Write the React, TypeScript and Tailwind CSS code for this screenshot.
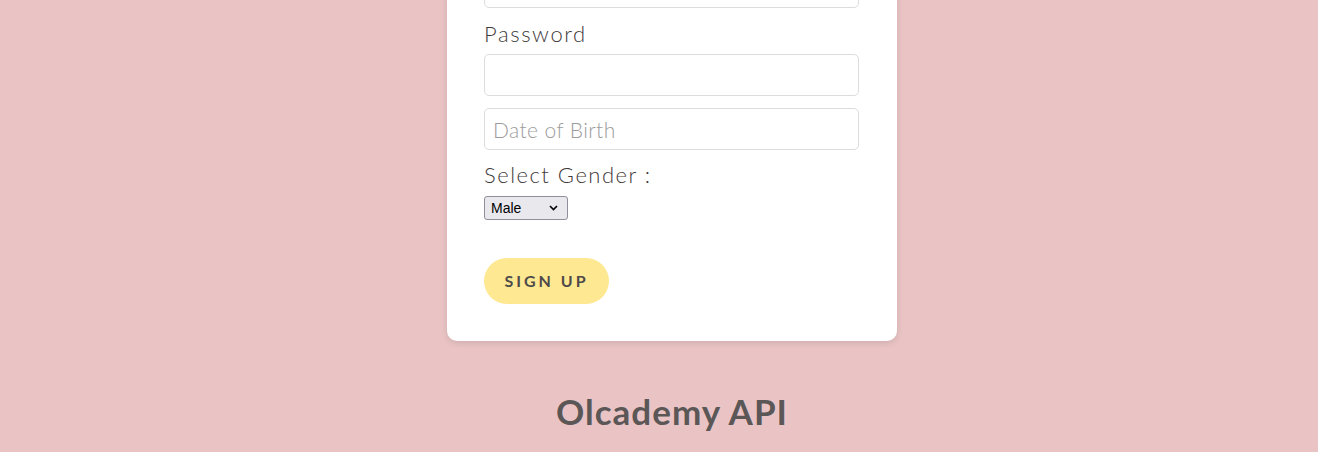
export default function App() {
  return (
    <div
      className="h-[452px] overflow-hidden bg-[#eac4c5] flex flex-col items-center pl-[26px]"
      style={{ fontFamily: "Lato, 'Open Sans', sans-serif" }}
    >
      {/* Sign-up card (top is scrolled out of view) */}
      <div className="-mt-[34px] w-[450px] bg-white rounded-[10px] shadow-[0_2px_6px_rgba(0,0,0,0.12)] pl-[37px] pr-[38px] pb-[37px] flex flex-col">
        <input
          type="email"
          className="h-[42px] w-full rounded-[5px] border border-[#dcdcdc] outline-none"
        />

        <label className="mt-[12px] mb-[6px] h-[28px] leading-[28px] text-[22px] font-light tracking-[1.6px] text-[#3f3a3a]">
          Password
        </label>
        <input
          type="password"
          className="h-[42px] w-full rounded-[5px] border border-[#dcdcdc] outline-none"
        />

        <input
          type="text"
          placeholder="Date of Birth"
          className="mt-[12px] h-[42px] w-full rounded-[5px] border border-[#dcdcdc] px-[8px] text-[21px] font-light tracking-[0.4px] text-[#4a4545] placeholder:text-[#9c9c9c] outline-none"
        />

        <label className="mt-[11px] h-[28px] leading-[28px] text-[22px] font-light tracking-[1.5px] text-[#3f3a3a]">
          Select Gender :
        </label>
        <div className="mt-[7px] relative w-[84px] h-[24px]">
          <select
            className="block appearance-none w-full h-full rounded-[3px] border border-[#8f8f9d] bg-[#e9e9ed] pl-[6px] text-[14px] text-black outline-none"
            style={{ fontFamily: "'Liberation Sans', Arial, sans-serif" }}
            defaultValue="male"
          >
            <option value="male">Male</option>
            <option value="female">Female</option>
          </select>
          <svg
            className="absolute left-[65px] top-[9px] pointer-events-none"
            width="9"
            height="6"
            viewBox="0 0 9 6"
            fill="none"
          >
            <path d="M1 1l3.5 3.5L8 1" stroke="#000" strokeWidth="1.6" />
          </svg>
        </div>

        <button className="mt-[38px] h-[46px] w-[125px] rounded-full bg-[#fee891] text-[16px] font-bold tracking-[3px] text-[#4f4a4a]">
          SIGN UP
        </button>
      </div>

      <h1 className="mt-[50px] h-[40px] leading-[40px] text-[35px] font-bold tracking-[1px] text-[#5b5757]">
        Olcademy API
      </h1>
    </div>
  )
}
